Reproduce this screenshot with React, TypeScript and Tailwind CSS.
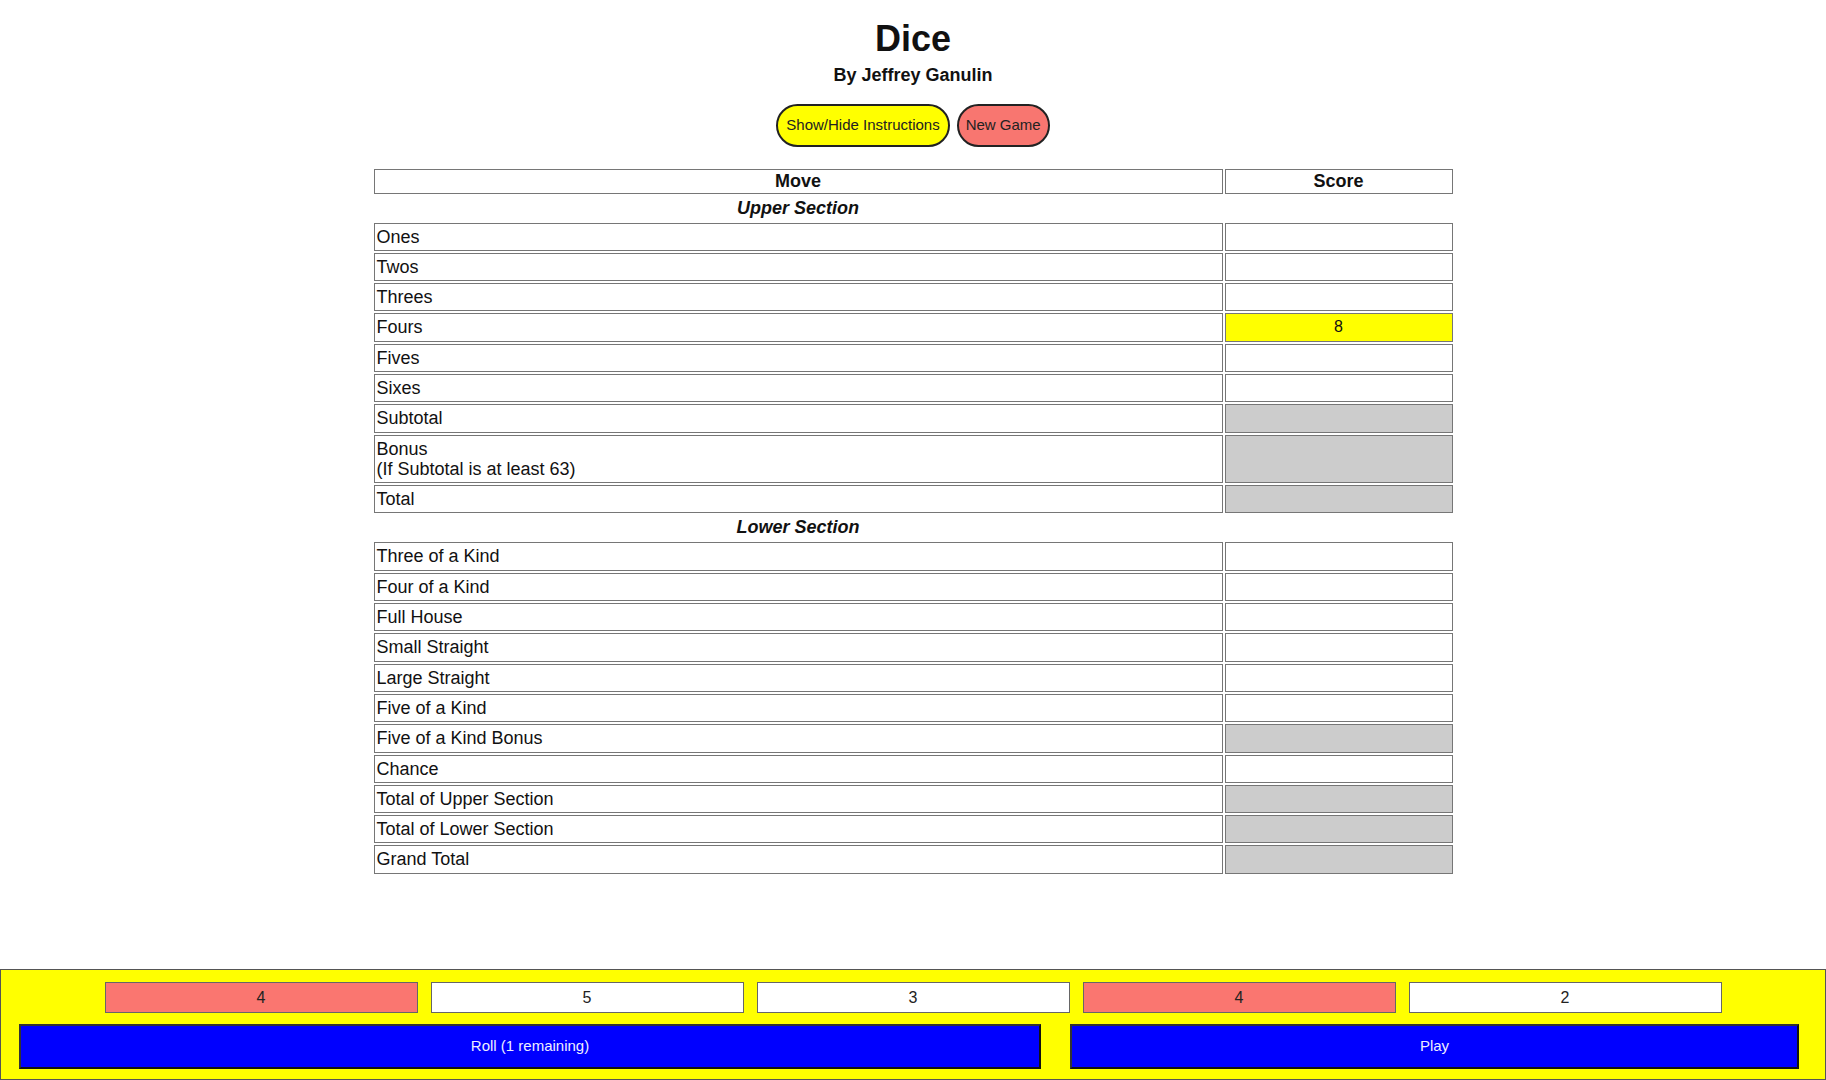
import React from "react";

type Row = { label: React.ReactNode; score?: string; kind?: "gray" | "yellow" };

const upper: Row[] = [
  { label: "Ones" },
  { label: "Twos" },
  { label: "Threes" },
  { label: "Fours", score: "8", kind: "yellow" },
  { label: "Fives" },
  { label: "Sixes" },
  { label: "Subtotal", kind: "gray" },
  {
    label: (
      <>
        Bonus
        <br />
        (If Subtotal is at least 63)
      </>
    ),
    kind: "gray",
  },
  { label: "Total", kind: "gray" },
];

const lower: Row[] = [
  { label: "Three of a Kind" },
  { label: "Four of a Kind" },
  { label: "Full House" },
  { label: "Small Straight" },
  { label: "Large Straight" },
  { label: "Five of a Kind" },
  { label: "Five of a Kind Bonus", kind: "gray" },
  { label: "Chance" },
  { label: "Total of Upper Section", kind: "gray" },
  { label: "Total of Lower Section", kind: "gray" },
  { label: "Grand Total", kind: "gray" },
];

const dice = [
  { v: "4", held: true },
  { v: "5", held: false },
  { v: "3", held: false },
  { v: "4", held: true },
  { v: "2", held: false },
];

function ScoreRow({ row }: { row: Row }) {
  const bg =
    row.kind === "gray" ? "bg-[#cccccc]" : row.kind === "yellow" ? "bg-[#ffff00]" : "bg-white";
  return (
    <tr>
      <td className="border border-[#767676] px-[2px] py-[3px] text-left leading-[20.3px] text-[18px] text-[#111]">
        {row.label}
      </td>
      <td className={`border border-[#767676] px-[2px] py-[3px] text-center leading-[20.3px] text-[16px] text-[#111] ${bg}`}>
        {row.score ?? ""}
      </td>
    </tr>
  );
}

function SectionRow({ title }: { title: string }) {
  return (
    <tr>
      <th className="py-[2px] text-center text-[18px] leading-[21px] font-bold italic text-[#111]">{title}</th>
      <th className="py-[2px]"></th>
    </tr>
  );
}

export default function App() {
  return (
    <div
      className="flex h-screen w-full flex-col bg-white text-black"
      style={{ fontFamily: '"Liberation Sans", Arial, sans-serif' }}
    >
      <main className="flex-1 overflow-hidden">
        <div className="flex flex-col items-center pt-[18px]">
          <h1 className="text-[36px] font-bold leading-[41px] text-[#111]">Dice</h1>
          <h2 className="mt-[6px] text-[18px] font-bold leading-[21px] text-[#111]">By Jeffrey Ganulin</h2>
          <div className="mt-[18px] flex gap-[7px]">
            <button className="h-[43px] rounded-full border-2 border-[#222] bg-[#ffff00] px-[8px] text-[15px] text-[#222]">
              Show/Hide Instructions
            </button>
            <button className="h-[43px] rounded-full border-2 border-[#222] bg-[#f87670] px-[7px] text-[15px] text-[#222]">
              New Game
            </button>
          </div>
        </div>
        <table className="mx-auto mt-[20px] w-[1083px] border-separate border-spacing-[2px]">
          <thead>
            <tr>
              <th className="border border-[#767676] py-[1px] text-center text-[18px] font-bold leading-[20.5px] text-[#111]">
                Move
              </th>
              <th className="w-[228px] border border-[#767676] py-[1px] text-center text-[18px] font-bold leading-[20.5px] text-[#111]">
                Score
              </th>
            </tr>
          </thead>
          <tbody>
            <SectionRow title="Upper Section" />
            {upper.map((r, i) => (
              <ScoreRow key={"u" + i} row={r} />
            ))}
            <SectionRow title="Lower Section" />
            {lower.map((r, i) => (
              <ScoreRow key={"l" + i} row={r} />
            ))}
          </tbody>
        </table>
      </main>
      <footer className="h-[111px] shrink-0 border border-[#555] bg-[#ffff00] pt-[12px]">
        <div className="flex justify-center gap-[13px]">
          {dice.map((d, i) => (
            <div
              key={i}
              className={`flex h-[31px] w-[313px] items-center justify-center border border-[#666] text-[16px] text-[#222] ${
                d.held ? "bg-[#fa7670]" : "bg-white"
              }`}
            >
              {d.v}
            </div>
          ))}
        </div>
        <div className="mt-[11px] flex gap-[29px] pl-[18px]">
          <button className="h-[45px] w-[1022px] border-2 border-t-[#333] border-l-[#333] border-b-[#111] border-r-[#111] bg-[#0000ff] text-[15px] text-[#eeeeff]">
            Roll (1 remaining)
          </button>
          <button className="h-[45px] w-[729px] border-2 border-t-[#333] border-l-[#333] border-b-[#111] border-r-[#111] bg-[#0000ff] text-[15px] text-[#eeeeff]">
            Play
          </button>
        </div>
      </footer>
    </div>
  );
}
